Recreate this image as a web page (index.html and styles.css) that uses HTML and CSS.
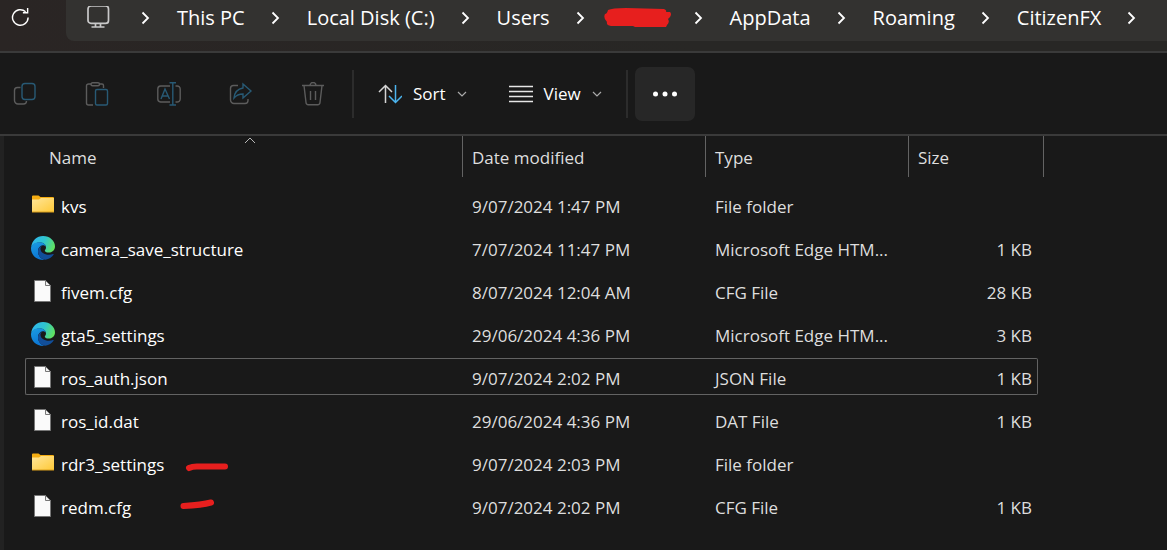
FILE: index.html
```html
<!DOCTYPE html>
<html lang="en">
<head>
<meta charset="utf-8">
<title>CitizenFX</title>
<link rel="stylesheet" href="styles.css">
</head>
<body>
<svg class="defs" aria-hidden="true">
  <defs>
    <linearGradient id="folder-fill" x1="0" y1="0" x2="1" y2="1"><stop offset="0" stop-color="#ffe69a"/><stop offset="1" stop-color="#ffc937"/></linearGradient>
    <linearGradient id="edge-top" x1="0" y1="0.3" x2="1" y2="0.6"><stop offset="0" stop-color="#2fb5ee"/><stop offset="0.5" stop-color="#2fc5cf"/><stop offset="1" stop-color="#62e25c"/></linearGradient>
    <linearGradient id="edge-left" x1="0" y1="0" x2="0.4" y2="1"><stop offset="0" stop-color="#1b9de2"/><stop offset="1" stop-color="#0b74d4"/></linearGradient>
    <symbol id="chevron" viewBox="0 0 10 14"><path d="M1.500 1.500L7 7l-5.500 5.500" fill="none" stroke="currentColor" stroke-width="1.800"/></symbol>
    <symbol id="caret" viewBox="0 0 10 6"><path d="M1 1l4 4 4-4" fill="none" stroke="currentColor" stroke-width="1.200"/></symbol>
    <symbol id="folder" viewBox="0 0 24 24"><path d="M1 3.500a1 1 0 0 1 1-1h5.500l2 1.500H22a1 1 0 0 1 1 1V8H1z" fill="#f5ad12"/><path d="M1 6.500h7l2-1.500h13v14H1z" fill="url(#folder-fill)"/><path d="M1 19h22" stroke="#dba01c"/></symbol>
    <symbol id="file" viewBox="0 0 24 24"><path d="M3.500 1.500h11l5 5v16h-16z" fill="#fafafa" stroke="#777"/><path d="M14.500 1.500v5h5z" fill="#f0f0f0" stroke="#777"/></symbol>
    <symbol id="edge" viewBox="0 0 24 24">
      <path d="M0.200 11C1 4.500 5.800 0 12 0c7 0 12 5 12 10.200 0 4-3 6.300-6.300 6.300-2.500 0-3.900-1-3.900-1.800 0-.6 1.200-1.200 1.200-3.200C15 8.500 12.500 6.500 8.500 6.500 4 6.500 1 9 .2 11z" fill="url(#edge-top)"/>
      <path d="M0 12.300C.2 8.400 4 6.300 8.200 6.300c3.800 0 6.200 1.800 6.700 4.200-1-.9-2-1.200-3-1.200C9 9.500 7 12.200 7 15.500c0 4 2.800 7.300 6.500 8.400C6 24.500 0 19.500 0 12.300z" fill="url(#edge-left)"/>
      <path d="M11.600 9.400C8.400 10.200 6.800 13 7 16c.3 4.500 3.500 7.500 7.500 7.700 3.500-.4 6.300-2.300 8-4.900.4-.7 0-1.100-.6-.8-1 .5-2.400.8-4 .8-4.700 0-8.400-2.700-8.400-6.100 0-1.400.8-2.600 2.100-3.300z" fill="#114e99"/>
    </symbol>
  </defs>
</svg>

<header class="address-bar">
  <button class="refresh" aria-label="Refresh"><svg width="19" height="19" viewBox="0 0 20 20" fill="none" stroke="currentColor" stroke-width="1.500"><path d="M18 10a8.200 8.200 0 1 1-2.600-6"/><path d="M12.500 5H17.500V0"/></svg></button>
  <nav class="path" aria-label="Address">
    <svg class="device" width="24" height="24" viewBox="0 2.500 24 24" fill="none" stroke="#c9c9c9" stroke-width="1.700"><rect x="2" y="2.400" width="20.500" height="17.500" rx="3"/><path d="M9.500 20v3M14.500 20v3M5.500 23.500h13"/></svg>
    <svg class="sep"><use href="#chevron"/></svg>
    <a href="#">This PC</a>
    <svg class="sep"><use href="#chevron"/></svg>
    <a href="#">Local Disk (C:)</a>
    <svg class="sep"><use href="#chevron"/></svg>
    <a href="#">Users</a>
    <svg class="sep"><use href="#chevron"/></svg>
    <a href="#" class="hidden-name" aria-label="User folder"><svg width="68" height="20" viewBox="0 0 68 20"><path d="M4 2Q8 0 22 0L60 1Q63 2 62 4L66 4Q68 6 66 9L64 11Q66 14 63 17L62 19H31L29 18H7Q2 17 3 14Q-1 10 1 6Q3 6 4 2z" fill="#e71f1e"/></svg></a>
    <svg class="sep"><use href="#chevron"/></svg>
    <a href="#">AppData</a>
    <svg class="sep"><use href="#chevron"/></svg>
    <a href="#">Roaming</a>
    <svg class="sep"><use href="#chevron"/></svg>
    <a href="#">CitizenFX</a>
    <svg class="sep"><use href="#chevron"/></svg>
  </nav>
</header>

<div class="toolbar" role="toolbar" aria-label="Commands">
  <div class="edit-tools">
    <button aria-label="Copy" disabled><svg class="tool" viewBox="0 0 24 24"><path d="M7.500 5.500H4.500a3 3 0 0 0-3 3v10a3.500 3.500 0 0 0 3.500 3.500h5.500a3 3 0 0 0 3-3"/><rect class="blue" x="9" y="1.500" width="13" height="16" rx="3"/></svg></button>
    <button aria-label="Paste" disabled><svg class="tool" viewBox="0 0 24 24"><path d="M6 2H3.500a2 2 0 0 0-2 2v17a2 2 0 0 0 2 2H8M14 2h3a1.500 1.500 0 0 1 1.500 1.500V6"/><rect x="6" y="0.800" width="8.500" height="3" rx="1.500"/><rect class="blue" x="10.500" y="7.500" width="12" height="15.500" rx="1.500"/></svg></button>
    <button aria-label="Rename" disabled><svg class="tool" viewBox="0 0 24 24"><path d="M13 4H3.500A3 3 0 0 0 .8 7v10a3 3 0 0 0 2.700 3H13M18.500 4h1.500a3 3 0 0 1 3.200 3v10a3 3 0 0 1-3.200 3h-1.500"/><path class="blue" d="M12.500.8h6.500M12.500 23h6.500M15.800.8V23M4 17L8 7l4.500 10M5.500 14H11"/></svg></button>
    <button aria-label="Share" disabled><svg class="tool" viewBox="0 0 24 24"><path d="M9 3.500H4.500a3 3 0 0 0-3 3V18a3.500 3.500 0 0 0 3.500 3.500h11a3 3 0 0 0 3-3V17"/><path class="blue" d="M14 2l8 7-8 7v-4c-4 0-6.500 1-9 4 .5-5 3-9 9-10z"/></svg></button>
    <button aria-label="Delete" disabled><svg class="tool" viewBox="0 0 24 24"><path d="M1 3.500h22M9 3.500a3 3 0 0 1 6 0M3 3.500l2 17a2.500 2.500 0 0 0 2.300 2.300h9.400a2.500 2.500 0 0 0 2.300-2.300l2-17M9.500 9v9M14.500 9v9"/></svg></button>
  </div>
  <div class="view-tools">
    <button class="menu"><svg width="24" height="20" viewBox="0 0 24 20" fill="none" stroke-width="1.500"><path d="M7.500 19V1.500M1 8l6.500-6.500L14 8" stroke="#d5d5d5"/><path d="M17.500 1v17.500M11 12l6.500 6.500L24 12" stroke="#4cb5ef"/></svg>Sort<svg class="caret"><use href="#caret"/></svg></button>
    <button class="menu"><svg width="24" height="18" viewBox="0 0 24 18" stroke="#e6e6e6" stroke-width="1.300"><path d="M0 1.500h24M0 6.500h24M0 11.500h24M0 16.500h24"/></svg>View<svg class="caret"><use href="#caret"/></svg></button>
  </div>
  <button class="more" aria-label="See more"><svg width="26" height="6" viewBox="0 0 26 6" fill="#fff"><circle cx="3.500" cy="3" r="2.500"/><circle cx="13" cy="3" r="2.500"/><circle cx="22.500" cy="3" r="2.500"/></svg></button>
</div>

<main class="listing">
<table class="files">
  <colgroup><col class="c-name"><col class="c-date"><col class="c-type"><col class="c-size"><col></colgroup>
  <thead>
    <tr>
      <th scope="col"><div class="head first">Name<svg class="sorted" viewBox="0 0 12 7"><path d="M1 6l5-5 5 5" fill="none" stroke="#b8b8b8"/></svg></div></th>
      <th scope="col"><div class="head">Date modified</div></th>
      <th scope="col"><div class="head">Type</div></th>
      <th scope="col"><div class="head">Size</div></th>
      <td></td>
    </tr>
  </thead>
  <tbody>
    <tr><td><div class="cell name"><svg class="icon"><use href="#folder"/></svg><span>kvs</span></div></td><td><div class="cell">9/07/2024 1:47 PM</div></td><td><div class="cell">File folder</div></td><td><div class="cell size"></div></td></tr>
    <tr><td><div class="cell name"><svg class="icon"><use href="#edge"/></svg><span>camera_save_structure</span></div></td><td><div class="cell">7/07/2024 11:47 PM</div></td><td><div class="cell">Microsoft Edge HTM...</div></td><td><div class="cell size">1 KB</div></td></tr>
    <tr><td><div class="cell name"><svg class="icon"><use href="#file"/></svg><span>fivem.cfg</span></div></td><td><div class="cell">8/07/2024 12:04 AM</div></td><td><div class="cell">CFG File</div></td><td><div class="cell size">28 KB</div></td></tr>
    <tr><td><div class="cell name"><svg class="icon"><use href="#edge"/></svg><span>gta5_settings</span></div></td><td><div class="cell">29/06/2024 4:36 PM</div></td><td><div class="cell">Microsoft Edge HTM...</div></td><td><div class="cell size">3 KB</div></td></tr>
    <tr class="focused"><td><div class="cell name"><svg class="icon"><use href="#file"/></svg><span>ros_auth.json</span></div></td><td><div class="cell">9/07/2024 2:02 PM</div></td><td><div class="cell">JSON File</div></td><td><div class="cell size">1 KB</div></td></tr>
    <tr><td><div class="cell name"><svg class="icon"><use href="#file"/></svg><span>ros_id.dat</span></div></td><td><div class="cell">29/06/2024 4:36 PM</div></td><td><div class="cell">DAT File</div></td><td><div class="cell size">1 KB</div></td></tr>
    <tr><td><div class="cell name"><svg class="icon"><use href="#folder"/></svg><span>rdr3_settings</span><svg class="mark mark-long" viewBox="0 0 44 10"><path d="M4 6Q8 4 14 4.500H40" /></svg></div></td><td><div class="cell">9/07/2024 2:03 PM</div></td><td><div class="cell">File folder</div></td><td><div class="cell size"></div></td></tr>
    <tr><td><div class="cell name"><svg class="icon"><use href="#file"/></svg><span>redm.cfg</span><svg class="mark mark-short" viewBox="0 0 34 10"><path d="M3.500 7Q22 6 31 3.500"/></svg></div></td><td><div class="cell">9/07/2024 2:02 PM</div></td><td><div class="cell">CFG File</div></td><td><div class="cell size">1 KB</div></td></tr>
  </tbody>
</table>
</main>
</body>
</html>
```
FILE: styles.css
```css
* {
  box-sizing: border-box;
}

body {
  margin: 0;
  min-height: 100vh;
  display: flex;
  flex-direction: column;
  background: #191919;
  color: #fff;
  font: 17px/24px "Open Sans", "Noto Sans", sans-serif;
  overflow: hidden;
}

button {
  padding: 0;
  border: 0;
  background: none;
  color: inherit;
  font: inherit;
}

svg {
  display: block;
  flex: none;
}

.defs {
  position: absolute;
  width: 0;
  height: 0;
}

.address-bar {
  display: flex;
  height: 53px;
  padding-bottom: 10px;
  background: linear-gradient(90deg, #2a2524, #282725 60%);
  border-bottom: 2px solid #3a3a3a;
}

.refresh {
  display: flex;
  width: 66px;
  padding: 8px 0 0 11px;
}

.path {
  flex: 1;
  min-width: 0;
  display: flex;
  align-items: center;
  padding: 0 0 5px 20px;
  background: #333230;
  border-radius: 0 0 0 8px;
  font-size: 20px;
  white-space: nowrap;
}

.path a {
  color: inherit;
  text-decoration: none;
}

/* The scribble spills past the name it covers. */
.path .hidden-name {
  margin: 0 -4px 0 -8px;
}

.sep {
  width: 10px;
  height: 14px;
  margin: 0 26px;
}

.device + .sep {
  margin-left: 31px;
}

.toolbar {
  display: flex;
  align-items: center;
  height: 83px;
  border-bottom: 2px solid #3a3a3a;
}

.edit-tools {
  display: flex;
  gap: 48px;
  padding: 0 27px 0 13px;
}

.tool {
  width: 24px;
  height: 24px;
  fill: none;
  stroke: #5c5c5c;
  stroke-width: 1.4;
}

.tool .blue {
  stroke: #285a75;
}

.view-tools {
  display: flex;
  align-items: center;
  gap: 42px;
  height: 48px;
  padding: 0 24px;
  border: solid #2c2c2c;
  border-width: 0 2px;
}

.menu {
  display: flex;
  align-items: center;
  gap: 11px;
}

.caret {
  width: 10px;
  height: 6px;
  color: #aaa;
}

.more {
  display: flex;
  align-items: center;
  justify-content: center;
  width: 60px;
  height: 54px;
  margin-left: 7px;
  border-radius: 7px;
  background: #272727;
}

.listing {
  flex: 1;
  padding-left: 21px;
  border-left: 4px solid #222;
}

.files {
  width: 100%;
  table-layout: fixed;
  border-collapse: collapse;
}

.c-name {
  width: 438px;
}

.c-date {
  width: 243px;
}

.c-type {
  width: 203px;
}

.c-size {
  width: 135px;
}

.files th,
.files thead td {
  padding: 0 0 6px;
  font-weight: 400;
  text-align: left;
  color: #dedede;
}

.head {
  position: relative;
  height: 41px;
  padding: 10px 0 0 9px;
  border-right: 1px solid #636363;
}

.head.first {
  padding-left: 24px;
}

.sorted {
  position: absolute;
  top: 1px;
  left: 50%;
  width: 12px;
  height: 7px;
}

.files tbody td {
  padding: 3px 0;
  color: #dedede;
}

.cell {
  display: flex;
  height: 37px;
  padding: 9px 0 0 9px;
  border: 0 solid #636363;
  white-space: nowrap;
}

.cell.name {
  gap: 6px;
  padding-left: 6px;
  color: #fff;
}

.cell.size {
  justify-content: flex-end;
  margin-right: 6px;
  padding-right: 6px;
}

.focused .cell {
  padding-top: 8px;
  border-width: 1px 0;
}

.focused .cell.name {
  padding-left: 5px;
  border-left-width: 1px;
  border-radius: 2px 0 0 2px;
}

.focused .cell.size {
  padding-right: 5px;
  border-right-width: 1px;
  border-radius: 0 2px 2px 0;
}

.icon {
  width: 24px;
  height: 24px;
  margin-top: -2px;
}

.mark {
  height: 10px;
  fill: none;
  stroke: #e71f1e;
  stroke-width: 6;
  stroke-linecap: round;
}

.mark-long {
  width: 44px;
  margin: 9px 0 0 15px;
}

.mark-short {
  width: 34px;
  margin: 3px 0 0 43px;
}
```
